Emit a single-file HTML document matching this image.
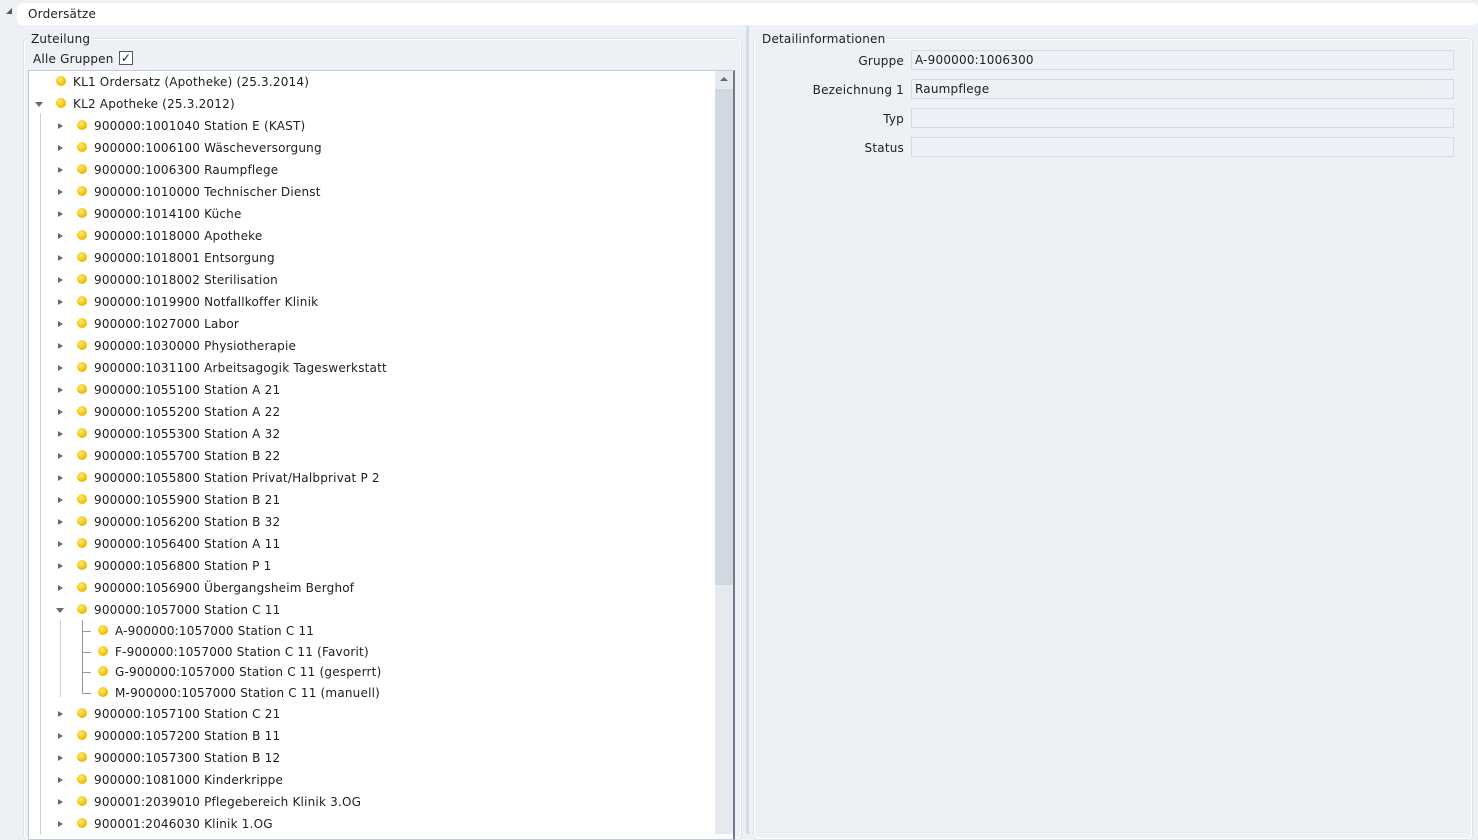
<!DOCTYPE html>
<html><head><meta charset="utf-8"><style>
*{margin:0;padding:0;box-sizing:border-box}
body{width:1478px;height:834px;background:#edf0f5;font-family:"DejaVu Sans","Liberation Sans",sans-serif;font-size:12px;color:#1e1e1e;position:relative;overflow:hidden;letter-spacing:0.2px}
.a{position:absolute;white-space:nowrap}
.top{left:17px;top:3px;width:1461px;height:22px;background:#fff;border-radius:5px}
.fs{border:1px solid #fff;border-radius:4px;box-shadow:0 0 0 1px #dde3ea}
.tree{left:28px;top:70px;width:707px;height:770px;background:#fff;border:1px solid #c3ccd6;border-right:2px solid #6e7c8c}
.r{position:absolute;height:16px;line-height:16px;margin-top:1px}
.dot{position:absolute;width:10px;height:10px;border-radius:50%;background:radial-gradient(circle at 40% 35%,#ffe97a,#f2c200 60%,#c79a00);top:2px}
.ar{position:absolute;top:5px;width:0;height:0;border-top:3.5px solid transparent;border-bottom:3.5px solid transparent;border-left:5px solid #6a6a6a}
.dn{position:absolute;top:6px;width:0;height:0;border-left:4px solid transparent;border-right:4px solid transparent;border-top:5px solid #6a6a6a}
.inp{position:absolute;left:911px;width:543px;height:20px;background:#edf0f5;border:1px solid #d2dbe5;line-height:18px;padding-left:3px}
.lbl{position:absolute;right:574px;text-align:right}
</style></head><body>
<div class="a top"></div>
<div class="a" style="left:6px;top:8px;width:0;height:0;border-left:6px solid transparent;border-bottom:6px solid #555"></div>
<div class="a" style="left:28px;top:7px">Ordersätze</div>

<div class="a fs" style="left:24px;top:39px;width:717px;height:800px"></div>
<div class="a" style="left:28px;top:32px;background:#edf0f5;padding:0 3px">Zuteilung</div>
<div class="a" style="left:33px;top:52px">Alle Gruppen</div>
<div class="a" style="left:119px;top:51px;width:14px;height:14px;border:1px solid #555;background:#fff;font-size:12px;line-height:12px;text-align:center">✓</div>

<div class="a" style="left:746px;top:26px;width:3px;height:808px;background:#d4dce6"></div>
<div class="a fs" style="left:754px;top:39px;width:718px;height:800px"></div>
<div class="a" style="left:759px;top:32px;background:#edf0f5;padding:0 3px">Detailinformationen</div>
<div class="lbl" style="top:54px">Gruppe</div><div class="inp" style="top:50px">A-900000:1006300</div>
<div class="lbl" style="top:83px">Bezeichnung 1</div><div class="inp" style="top:79px">Raumpflege</div>
<div class="lbl" style="top:112px">Typ</div><div class="inp" style="top:108px"></div>
<div class="lbl" style="top:141px">Status</div><div class="inp" style="top:137px"></div>

<div class="a tree"></div>
<div class="a" style="left:715px;top:71px;width:18px;height:763px;background:#e6eaef"></div>
<div class="a" style="left:715px;top:89px;width:18px;height:496px;background:#d0d8e2;border-radius:2px"></div>
<div class="a" style="left:720px;top:77px;width:0;height:0;border-left:4px solid transparent;border-right:4px solid transparent;border-bottom:4px solid #667"></div>
<div class="a" style="left:40px;top:113px;width:1px;height:721px;background:#c9d0d8"></div>
<div class="a" style="left:60px;top:620px;width:1px;height:77px;background:#c9d0d8"></div>
<div class="a" style="left:82px;top:631px;width:9px;height:1px;background:#999"></div>
<div class="a" style="left:82px;top:652px;width:9px;height:1px;background:#999"></div>
<div class="a" style="left:82px;top:672px;width:9px;height:1px;background:#999"></div>
<div class="a" style="left:82px;top:693px;width:9px;height:1px;background:#999"></div>
<div class="a" style="left:82px;top:620px;width:1px;height:74px;background:#999"></div>

<div class="r" style="left:0;top:73px"><span class="dot" style="left:56px"></span><span class="a" style="left:73px">KL1 Ordersatz (Apotheke) (25.3.2014)</span></div>
<div class="r" style="left:0;top:95px"><span class="dn" style="left:35px"></span><span class="dot" style="left:56px"></span><span class="a" style="left:73px">KL2 Apotheke (25.3.2012)</span></div>

<div class="r" style="top:117px"><span class="ar" style="left:58px"></span><span class="dot" style="left:77px"></span><span class="a" style="left:94px">900000:1001040 Station E (KAST)</span></div>
<div class="r" style="top:139px"><span class="ar" style="left:58px"></span><span class="dot" style="left:77px"></span><span class="a" style="left:94px">900000:1006100 Wäscheversorgung</span></div>
<div class="r" style="top:161px"><span class="ar" style="left:58px"></span><span class="dot" style="left:77px"></span><span class="a" style="left:94px">900000:1006300 Raumpflege</span></div>
<div class="r" style="top:183px"><span class="ar" style="left:58px"></span><span class="dot" style="left:77px"></span><span class="a" style="left:94px">900000:1010000 Technischer Dienst</span></div>
<div class="r" style="top:205px"><span class="ar" style="left:58px"></span><span class="dot" style="left:77px"></span><span class="a" style="left:94px">900000:1014100 Küche</span></div>
<div class="r" style="top:227px"><span class="ar" style="left:58px"></span><span class="dot" style="left:77px"></span><span class="a" style="left:94px">900000:1018000 Apotheke</span></div>
<div class="r" style="top:249px"><span class="ar" style="left:58px"></span><span class="dot" style="left:77px"></span><span class="a" style="left:94px">900000:1018001 Entsorgung</span></div>
<div class="r" style="top:271px"><span class="ar" style="left:58px"></span><span class="dot" style="left:77px"></span><span class="a" style="left:94px">900000:1018002 Sterilisation</span></div>
<div class="r" style="top:293px"><span class="ar" style="left:58px"></span><span class="dot" style="left:77px"></span><span class="a" style="left:94px">900000:1019900 Notfallkoffer Klinik</span></div>
<div class="r" style="top:315px"><span class="ar" style="left:58px"></span><span class="dot" style="left:77px"></span><span class="a" style="left:94px">900000:1027000 Labor</span></div>
<div class="r" style="top:337px"><span class="ar" style="left:58px"></span><span class="dot" style="left:77px"></span><span class="a" style="left:94px">900000:1030000 Physiotherapie</span></div>
<div class="r" style="top:359px"><span class="ar" style="left:58px"></span><span class="dot" style="left:77px"></span><span class="a" style="left:94px">900000:1031100 Arbeitsagogik Tageswerkstatt</span></div>
<div class="r" style="top:381px"><span class="ar" style="left:58px"></span><span class="dot" style="left:77px"></span><span class="a" style="left:94px">900000:1055100 Station A 21</span></div>
<div class="r" style="top:403px"><span class="ar" style="left:58px"></span><span class="dot" style="left:77px"></span><span class="a" style="left:94px">900000:1055200 Station A 22</span></div>
<div class="r" style="top:425px"><span class="ar" style="left:58px"></span><span class="dot" style="left:77px"></span><span class="a" style="left:94px">900000:1055300 Station A 32</span></div>
<div class="r" style="top:447px"><span class="ar" style="left:58px"></span><span class="dot" style="left:77px"></span><span class="a" style="left:94px">900000:1055700 Station B 22</span></div>
<div class="r" style="top:469px"><span class="ar" style="left:58px"></span><span class="dot" style="left:77px"></span><span class="a" style="left:94px">900000:1055800 Station Privat/Halbprivat P 2</span></div>
<div class="r" style="top:491px"><span class="ar" style="left:58px"></span><span class="dot" style="left:77px"></span><span class="a" style="left:94px">900000:1055900 Station B 21</span></div>
<div class="r" style="top:513px"><span class="ar" style="left:58px"></span><span class="dot" style="left:77px"></span><span class="a" style="left:94px">900000:1056200 Station B 32</span></div>
<div class="r" style="top:535px"><span class="ar" style="left:58px"></span><span class="dot" style="left:77px"></span><span class="a" style="left:94px">900000:1056400 Station A 11</span></div>
<div class="r" style="top:557px"><span class="ar" style="left:58px"></span><span class="dot" style="left:77px"></span><span class="a" style="left:94px">900000:1056800 Station P 1</span></div>
<div class="r" style="top:579px"><span class="ar" style="left:58px"></span><span class="dot" style="left:77px"></span><span class="a" style="left:94px">900000:1056900 Übergangsheim Berghof</span></div>
<div class="r" style="top:601px"><span class="dn" style="left:56px"></span><span class="dot" style="left:77px"></span><span class="a" style="left:94px">900000:1057000 Station C 11</span></div>
<div class="r" style="top:622px"><span class="dot" style="left:98px"></span><span class="a" style="left:115px">A-900000:1057000 Station C 11</span></div>
<div class="r" style="top:643px"><span class="dot" style="left:98px"></span><span class="a" style="left:115px">F-900000:1057000 Station C 11 (Favorit)</span></div>
<div class="r" style="top:663px"><span class="dot" style="left:98px"></span><span class="a" style="left:115px">G-900000:1057000 Station C 11 (gesperrt)</span></div>
<div class="r" style="top:684px"><span class="dot" style="left:98px"></span><span class="a" style="left:115px">M-900000:1057000 Station C 11 (manuell)</span></div>
<div class="r" style="top:705px"><span class="ar" style="left:58px"></span><span class="dot" style="left:77px"></span><span class="a" style="left:94px">900000:1057100 Station C 21</span></div>
<div class="r" style="top:727px"><span class="ar" style="left:58px"></span><span class="dot" style="left:77px"></span><span class="a" style="left:94px">900000:1057200 Station B 11</span></div>
<div class="r" style="top:749px"><span class="ar" style="left:58px"></span><span class="dot" style="left:77px"></span><span class="a" style="left:94px">900000:1057300 Station B 12</span></div>
<div class="r" style="top:771px"><span class="ar" style="left:58px"></span><span class="dot" style="left:77px"></span><span class="a" style="left:94px">900000:1081000 Kinderkrippe</span></div>
<div class="r" style="top:793px"><span class="ar" style="left:58px"></span><span class="dot" style="left:77px"></span><span class="a" style="left:94px">900001:2039010 Pflegebereich Klinik 3.OG</span></div>
<div class="r" style="top:815px"><span class="ar" style="left:58px"></span><span class="dot" style="left:77px"></span><span class="a" style="left:94px">900001:2046030 Klinik 1.OG</span></div>
</body></html>
